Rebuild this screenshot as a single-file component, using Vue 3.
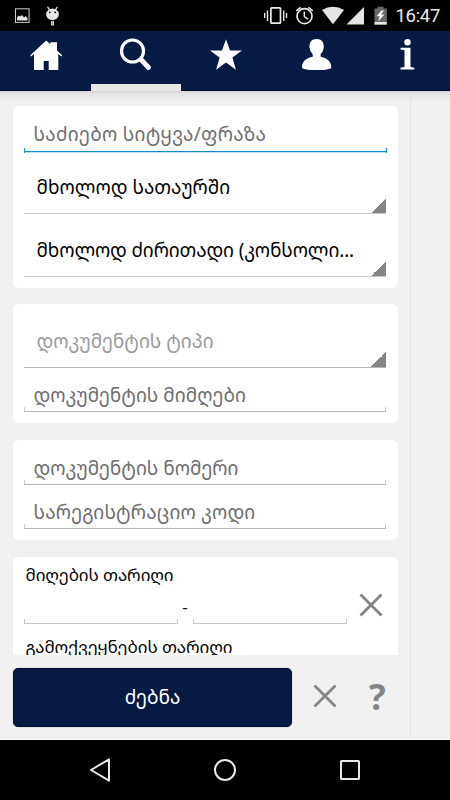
<script setup>
const filters = [
  [
    { kind: 'input', text: 'საძიებო სიტყვა/ფრაზა', cls: 'focused' },
    { kind: 'spinner', text: 'მხოლოდ სათაურში', cls: 'first' },
    { kind: 'spinner', text: 'მხოლოდ ძირითადი (კონსოლი...', cls: 'long' },
  ],
  [
    { kind: 'spinner', text: 'დოკუმენტის ტიპი', cls: 'hint' },
    { kind: 'input', text: 'დოკუმენტის მიმღები', cls: '' },
  ],
  [
    { kind: 'input', text: 'დოკუმენტის ნომერი', cls: '' },
    { kind: 'input', text: 'სარეგისტრაციო კოდი', cls: 'code' },
  ],
]
</script>

<template>
  <div class="screen">
    <header class="status">
      <svg class="notices" width="70" height="31" viewBox="0 0 70 31">
        <rect x="15.5" y="8.8" width="13.6" height="13.6" fill="none" stroke="#cfcfcf" />
        <path d="M17 20.5v-3l2-2 1.5 1 1.5-1.5 2 2.5 1.5-1.5 2 2.5v2z" fill="#e6e6e6" />
        <path d="M48 6.5l2 2.7q2.500-1.200 5 0l2-2.700.9.600-1.600 2.700q2.600 2 2.600 4.200 0 5.500-6.400 6.200-6.400-.700-6.400-6.200 0-2.200 2.600-4.200L47 7.100z" fill="#e6e6e6" />
        <circle cx="49.8" cy="12.300" r=".9" /><circle cx="55.2" cy="12.300" r=".9" />
        <rect x="51" y="21" width="3" height="4.500" fill="#ddd" />
        <path d="M52.500 21v3.500" stroke="#666" stroke-width=".7" />
      </svg>
      <svg class="signals" width="130" height="31" viewBox="260 0 130 31">
        <g fill="none" stroke="#e8e8e8">
          <rect x="270.900" y="7.900" width="9.600" height="15.200" rx=".7" stroke-width="1.700" />
          <path d="M264.700 13v5M267.500 10.500v10.500M283.700 10.500v10.500M286.500 13v5" stroke-width="1.400" />
          <circle cx="304.500" cy="16.200" r="7.500" stroke-width="1.700" />
          <path d="M304.300 11.500v5.200l4 2.400" stroke-width="1.400" />
          <path d="M296.200 10.800l4.400-3.500M312.800 10.800l-4.400-3.500" stroke-width="1.700" />
        </g>
        <path d="M322 10q11-6.300 22 0l-11 14.300z" fill="#e6e6e6" />
        <path d="M346.500 24.500L364 7v17.500z" fill="#e6e6e6" />
        <path d="M374.500 8.500h3V6.700h6v1.800h3.300V22h-12.300z" fill="#686868" />
        <path d="M374.500 22h12.300v2.700h-12.300z" fill="#e6e6e6" />
        <path d="M381.500 10.500l-4.900 5.700h3.200l-1.600 5.300 6.200-6.900h-3.400l2.900-4.100z" fill="#fff" />
      </svg>
      <span class="clock">16:47</span>
    </header>

    <nav class="tabs">
      <div class="tab">
        <svg width="89" height="59" viewBox="0 31 89 59"><path d="M30.300 55.200L46.200 40.500l4.100 3.800v-2h6.700v8.200l5.200 4.700-.8 1.300-3.100-2.600V70h-9.600v-9h-5v9H34V53.900l-2.900 2.600z" fill="#fff" /></svg>
      </div>
      <div class="tab active">
        <svg width="90" height="52" viewBox="91 31 90 52"><circle cx="132.500" cy="51" r="11" fill="none" stroke="#fff" stroke-width="3.200" /><path d="M141 59.500l7.500 8" stroke="#fff" stroke-width="4.800" stroke-linecap="round" /></svg>
      </div>
      <div class="tab">
        <svg width="90" height="59" viewBox="181 31 90 59"><path d="M226 39.300l4 11.100h12l-9.600 7.100 3.500 12.300-9.900-7.300-9.900 7.300 3.500-12.300-9.600-7.100h12z" fill="#fff" /></svg>
      </div>
      <div class="tab">
        <svg width="90" height="59" viewBox="271 31 90 59"><path d="M316.600 39c5 0 7.600 3.300 7.200 8.500q-.300 4.400-3.200 6.700v2.500c6 1.200 10.700 4.300 10.700 10.500q0 2.800-14.700 2.800T302 67.200c0-6.200 4.700-9.300 10.700-10.500v-2.500q-2.900-2.300-3.200-6.700c-.400-5.200 2.100-8.500 7.100-8.500z" fill="#fff" /></svg>
      </div>
      <div class="tab">
        <svg width="89" height="59" viewBox="361 31 89 59"><circle cx="407.500" cy="42.300" r="3.200" fill="#fff" /><path d="M400.500 47.800h10v19.300l3.800.6v1.700h-13.800v-1.700l4-.6V50.200l-4-.6z" fill="#fff" /></svg>
      </div>
    </nav>

    <div class="body">
      <main class="page">
        <div class="filters">
          <section v-for="(card, i) in filters" :key="i" class="card" :class="'card-' + (i + 1)">
            <div v-for="row in card" :key="row.text" :class="[row.kind, row.cls]"><span>{{ row.text }}</span></div>
          </section>
          <section class="card dates">
            <div class="label received">მიღების თარიღი</div>
            <div class="range">
              <div class="date"></div><span class="dash">-</span><div class="date"></div>
              <svg class="clear" width="24" height="24" viewBox="0 0 24 24"><path d="M1.500 1.500l21 21M22.500 1.500l-21 21" /></svg>
            </div>
            <div class="label published">გამოქვეყნების თარიღი</div>
          </section>
        </div>
        <footer class="actions">
          <button class="search">ძებნა</button>
          <svg class="clear" width="24" height="24" viewBox="0 0 24 24"><path d="M1.500 1.500l21 21M22.500 1.500l-21 21" /></svg>
          <span class="help">?</span>
        </footer>
      </main>
    </div>

    <nav class="system">
      <svg width="450" height="60" viewBox="0 740 450 60" fill="none" stroke="#e9e9e9" stroke-width="2">
        <path d="M109 759.300v21.400L91 770z" stroke-linejoin="round" />
        <circle cx="225" cy="770" r="10" />
        <rect x="341" y="761" width="18" height="18" rx=".5" />
      </svg>
    </nav>
  </div>
</template>

<style>
body { margin: 0; background: #000; }
</style>

<style scoped>
* { box-sizing: border-box; }
.screen { width: 450px; height: 800px; display: flex; flex-direction: column; overflow: hidden; font-family: "Noto Sans Georgian", "Noto Sans", "DejaVu Sans", sans-serif; }
svg { display: block; flex: none; }
.status { height: 31px; flex: none; display: flex; background: #000; }
.signals { margin-left: 190px; }
.clock { font: 18.500px/33px Roboto, sans-serif; color: #e9e9e9; margin-left: 5.500px; letter-spacing: -.3px; }
.tabs { height: 60px; flex: none; display: grid; grid-template-columns: 91px 90px 90px 90px 89px; background: #071a43; border-bottom: 1px solid #030b28; }
.tab.active { border-bottom: 7px solid #e6e6e6; height: 60px; }
.body { height: 649px; flex: none; background: linear-gradient(#d4d4d4, #e6e6e6 3px, #f1f1f1 12px); border-bottom: 1px solid #fafafa; }
.page { width: 411px; height: 648px; border-right: 1px solid #e3e3e3; }
.filters { height: 564px; overflow: hidden; padding: 15px 12.500px 0 12.500px; display: flex; flex-direction: column; }
.card { flex: none; background: #fff; border-radius: 6px; padding: 0 11.500px 0 11px; margin-bottom: 16px; display: flex; flex-direction: column; }
.card-1 { height: 182px; }
.card-2 { height: 119px; margin-bottom: 17px; }
.card-3 { height: 100px; margin-bottom: 17px; }
.input { height: 44px; flex: none; padding: 13px 10px 0; font-size: 19px; line-height: 28px; color: #6f6f6f; white-space: nowrap; background: linear-gradient(#b5b5b5, #b5b5b5) bottom / 100% 1px no-repeat, linear-gradient(#ccc, #ccc) left bottom / 1px 5px no-repeat, linear-gradient(#ccc, #ccc) right bottom / 1px 5px no-repeat; }
.input.focused { height: 47px; padding-top: 14px; margin-right: -.500px; letter-spacing: .27px; border: 1px solid #2492ce; border-top: 0; border-bottom: 0; padding-left: 9px; background: linear-gradient(#1689ca 50%, #b9dcef 50%) bottom / 100% 2px no-repeat; border-image: linear-gradient(transparent 41px, #2492ce 41px, #2492ce 46px, #b9dcef 46px) 1; }
.input.code { letter-spacing: .15px; }
.card-3 .input:first-child { height: 45px; padding-top: 14px; }
.spinner { height: 63px; flex: none; padding: 22px 12px 0 13px; font-size: 19px; line-height: 28px; color: #050505; white-space: nowrap; border-bottom: 1px solid #c9c9c9; background: linear-gradient(135deg, transparent 50%, #858585 50%) right bottom / 15px 15px no-repeat; }
.spinner.first { height: 61px; padding-top: 20px; }
.spinner.long { letter-spacing: -.13px; }
.spinner.hint { height: 64px; padding-top: 23px; color: #9b9b9b; border-color: #b5b5b5; }
.dates { height: 160px; }
.label { font-size: 17px; line-height: 24px; color: #050505; white-space: nowrap; padding-left: 2px; height: 24px; letter-spacing: -.1px; }
.received { margin-top: 6px; }
.range { display: flex; align-items: flex-end; height: 37px; }
.date { width: 154px; height: 5px; border: 1px solid #c7c7c7; border-top: 0; }
.dash { width: 15px; text-align: center; font-size: 17px; line-height: 24px; height: 29px; color: #111; }
.clear { fill: none; stroke: #848484; stroke-width: 2.800; }
.range .clear { margin: 0 0 7px 12.500px; }
.published { margin-top: 11px; }
.actions { height: 84px; display: flex; align-items: flex-start; padding: 13px 0 0 13px; }
.search { width: 279px; height: 59px; border: 1px solid #021035; border-radius: 5px; background: #071a43; color: #fff; font: inherit; font-size: 19px; line-height: 56px; padding: 0 0 1px; box-shadow: 0 0 1px #777; }
.actions .clear { margin: 16px 0 0 21px; }
.help { font: bold 35px/57px "Open Sans", sans-serif; color: #848484; margin-left: 32px; }
.system { height: 60px; flex: none; background: #000; }
</style>
